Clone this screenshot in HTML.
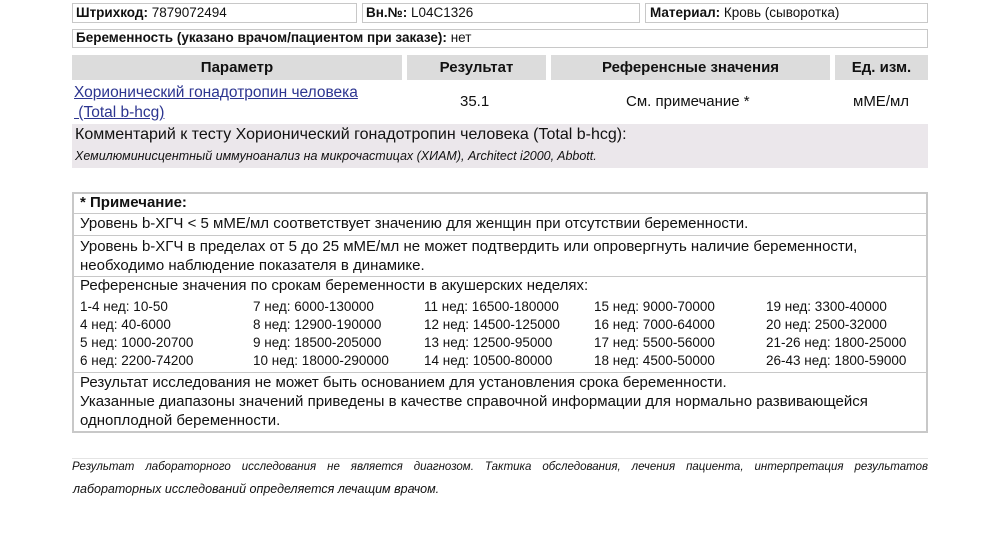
<!DOCTYPE html>
<html><head><meta charset="utf-8"><style>
*{margin:0;padding:0;box-sizing:border-box}
body{width:1000px;height:546px;background:#fff;font-family:"Liberation Sans","DejaVu Sans",sans-serif;color:#111;position:relative;overflow:hidden;font-size:14px}
.a{position:absolute;white-space:nowrap}
.box{position:absolute;border:1px solid #c8c8c8;background:#fff}
.hd{position:absolute;background:#dcdcdc;font-weight:bold;font-size:15px;text-align:center;line-height:25px;top:55px;height:25px}
b{font-weight:bold}
.ln{position:absolute;left:73px;width:855px;height:1px;background:#c8c8c8}
.g{font-size:13.5px}
.n{font-size:15px}
</style></head><body>
<div class="box" style="left:72px;top:3px;width:285px;height:20px"></div>
<div class="box" style="left:362px;top:3px;width:278px;height:20px"></div>
<div class="box" style="left:645px;top:3px;width:283px;height:20px"></div>
<div class="a" style="left:76px;top:5px;font-size:13.5px"><b>Штрихкод:</b> 7879072494</div>
<div class="a" style="left:366px;top:5px;font-size:13.5px"><b>Вн.№:</b> L04C1326</div>
<div class="a" style="left:650px;top:5px;font-size:13.5px"><b>Материал:</b> Кровь (сыворотка)</div>
<div class="box" style="left:72px;top:29px;width:856px;height:19px"></div>
<div class="a" style="left:76px;top:30px;font-size:13.5px"><b>Беременность (указано врачом/пациентом при заказе):</b> нет</div>

<div class="hd" style="left:72px;width:330px">Параметр</div>
<div class="hd" style="left:407px;width:139px">Результат</div>
<div class="hd" style="left:551px;width:279px">Референсные значения</div>
<div class="hd" style="left:835px;width:93px">Ед. изм.</div>

<div class="a" style="left:74px;top:83px;font-size:15.5px;color:#2c3590;text-decoration:underline;line-height:20px">Хорионический гонадотропин человека<br>&nbsp;(Total b-hcg)</div>
<div class="a" style="left:460px;top:93px;font-size:15px">35.1</div>
<div class="a" style="left:626px;top:93px;font-size:15px">См. примечание *</div>
<div class="a" style="left:853px;top:93px;font-size:15px">мМЕ/мл</div>

<div style="position:absolute;left:72px;top:124px;width:856px;height:44px;background:#ebe7eb"></div>
<div class="a" style="left:75px;top:126px;font-size:16px">Комментарий к тесту Хорионический гонадотропин человека (Total b-hcg):</div>
<div class="a" style="left:75px;top:149px;font-size:12.5px;font-style:italic">Хемилюминисцентный иммуноанализ на микрочастицах (ХИАМ), Architect i2000, Abbott.</div>

<div class="box" style="left:72px;top:192px;width:856px;height:241px;border-width:2px"></div>
<div class="ln" style="top:213px"></div>
<div class="ln" style="top:235px"></div>
<div class="ln" style="top:276px"></div>
<div class="ln" style="top:372px"></div>
<div class="a n" style="left:80px;top:194px"><b>* Примечание:</b></div>
<div class="a n" style="left:80px;top:215px">Уровень b-ХГЧ &lt; 5 мМЕ/мл соответствует значению для женщин при отсутствии беременности.</div>
<div class="a n" style="left:80px;top:237px;line-height:19px">Уровень b-ХГЧ в пределах от 5 до 25 мМЕ/мл не может подтвердить или опровергнуть наличие беременности,<br>необходимо наблюдение показателя в динамике.</div>
<div class="a n" style="left:80px;top:277px">Референсные значения по срокам беременности в акушерских неделях:</div>
<div class="a g" style="left:80px;top:298px;line-height:18px">1-4 нед: 10-50<br>4 нед: 40-6000<br>5 нед: 1000-20700<br>6 нед: 2200-74200</div>
<div class="a g" style="left:253px;top:298px;line-height:18px">7 нед: 6000-130000<br>8 нед: 12900-190000<br>9 нед: 18500-205000<br>10 нед: 18000-290000</div>
<div class="a g" style="left:424px;top:298px;line-height:18px">11 нед: 16500-180000<br>12 нед: 14500-125000<br>13 нед: 12500-95000<br>14 нед: 10500-80000</div>
<div class="a g" style="left:594px;top:298px;line-height:18px">15 нед: 9000-70000<br>16 нед: 7000-64000<br>17 нед: 5500-56000<br>18 нед: 4500-50000</div>
<div class="a g" style="left:766px;top:298px;line-height:18px">19 нед: 3300-40000<br>20 нед: 2500-32000<br>21-26 нед: 1800-25000<br>26-43 нед: 1800-59000</div>
<div class="a n" style="left:80px;top:373px;line-height:19px">Результат исследования не может быть основанием для установления срока беременности.<br>Указанные диапазоны значений приведены в качестве справочной информации для нормально развивающейся<br>одноплодной беременности.</div>

<div style="position:absolute;left:72px;top:458px;width:856px;height:1px;background:#e4e4e4"></div>
<div class="a" style="left:72px;top:461px;font-size:11.5px;font-style:italic;width:856px;text-align:justify;text-align-last:justify;white-space:normal">Результат лабораторного исследования не является диагнозом. Тактика обследования, лечения пациента, интерпретация результатов</div>
<div class="a" style="left:73px;top:482px;font-size:12.5px;font-style:italic">лабораторных исследований определяется лечащим врачом.</div>
</body></html>
